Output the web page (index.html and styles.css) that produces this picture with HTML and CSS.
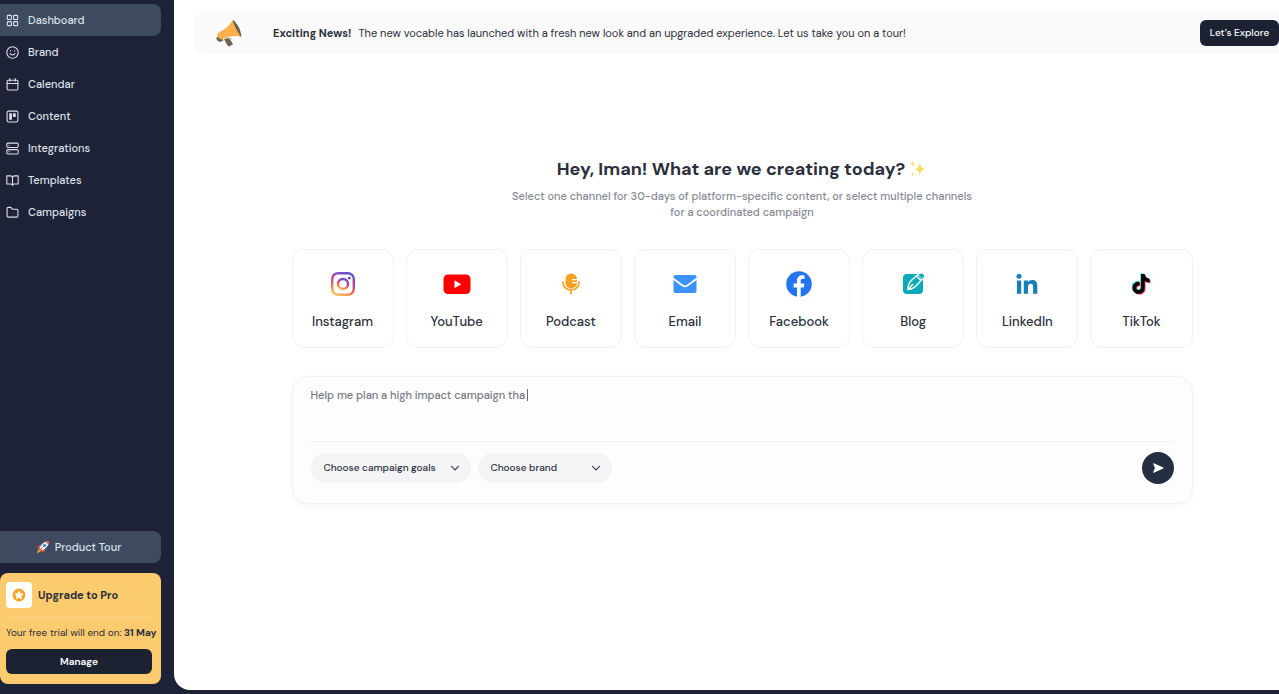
FILE: index.html
```
<!DOCTYPE html>
<html lang="en">
<head>
	<meta charset="UTF-8">
	<meta name="viewport" content="width=device-width, initial-scale=1">
	<title>Vocable - Dashboard</title>
	<link rel="stylesheet" href="styles.css">
</head>
<body>
	<div class="app">
		<aside class="sidebar">
			<nav class="nav">
				<a href="#" class="nav-item on">
					<svg class="icon" viewBox="0 0 24 24"><rect x="2.5" y="2.5" width="7.5" height="7.5" rx="1"/><rect x="14" y="2.5" width="7.5" height="7.5" rx="1"/><rect x="2.5" y="14" width="7.5" height="7.5" rx="1"/><rect x="14" y="14" width="7.5" height="7.5" rx="1"/></svg>
					Dashboard
				</a>
				<a href="#" class="nav-item">
					<svg class="icon" viewBox="0 0 24 24"><circle cx="12" cy="12" r="10.5"/><path d="M7.5 14s1.5 2.500 4.500 2.500 4.500-2.500 4.500-2.500M8.500 8.500v.8M15.500 8.500v.8"/></svg>
					Brand
				</a>
				<a href="#" class="nav-item">
					<svg class="icon" viewBox="0 0 24 24"><rect x="2" y="4" width="20" height="18" rx="2"/><path d="M7 1v5M17 1v5M2 10h20"/></svg>
					Calendar
				</a>
				<a href="#" class="nav-item">
					<svg class="icon" viewBox="0 0 24 24"><rect x="2" y="2" width="20" height="20" rx="3"/><path class="solid" d="M6 6h5v12H6zM13 6h5v7h-5z"/></svg>
					Content
				</a>
				<a href="#" class="nav-item">
					<svg class="icon" viewBox="0 0 24 24"><rect x="1.500" y="2" width="21" height="8" rx="2"/><rect x="1.500" y="14" width="21" height="8" rx="2"/><path d="M5.500 6h.5M5.500 18h.5"/></svg>
					Integrations
				</a>
				<a href="#" class="nav-item">
					<svg class="icon" viewBox="0 0 24 24"><path d="M1.500 3.500h7a3.500 3.500 0 0 1 3.500 3.500v14a3 3 0 0 0-3-2.500H1.500zM22.500 3.500h-7A3.500 3.500 0 0 0 12 7v14a3 3 0 0 1 3-2.500h7.500z"/></svg>
					Templates
				</a>
				<a href="#" class="nav-item">
					<svg class="icon" viewBox="0 0 24 24"><path d="M22 18.500a2 2 0 0 1-2 2H4a2 2 0 0 1-2-2v-14a2 2 0 0 1 2-2h5l2.500 3.500H20a2 2 0 0 1 2 2z"/></svg>
					Campaigns
				</a>
			</nav>

			<div class="sidebar-bottom">
				<button type="button" class="tour">
					<svg class="rocket" viewBox="0 0 28 28">
						<path fill="#f7a823" d="M9 17c-4 0-6 4-7 9 5-1 8-3 9-7z"/>
						<path fill="#d9493c" d="M11 9c-4 0-7 3-9 7l6 1zM19 17c0 4-3 7-7 9l-1-6z"/>
						<path fill="#e4edf2" d="M26 2C18 2 11 7 7 16l5 5c9-4 14-11 14-19z"/>
						<path fill="#d9493c" d="M26 2c-3 0-5 .4-7 1.200L24.800 9C25.600 7 26 5 26 2z"/>
						<circle cx="17" cy="11" r="3.500" fill="#4d94c4"/>
						<path stroke="#b5433b" stroke-width="2" stroke-linecap="round" d="M7 21l5-5"/>
					</svg>
					Product Tour
				</button>

				<section class="upgrade">
					<div class="upgrade-head">
						<span class="upgrade-icon">
							<svg viewBox="0 0 24 24"><circle cx="12" cy="12" r="11" fill="#f8a42b"/><path fill="#fff" stroke="#fff" stroke-width="1.500" stroke-linejoin="round" d="M12 5.500l2 4.300 4.600.6-3.400 3.200.9 4.600-4.100-2.300-4.100 2.300.9-4.600-3.400-3.200 4.600-.6z"/></svg>
						</span>
						<h2>Upgrade to Pro</h2>
					</div>
					<p>Your free trial will end on: <b>31 May</b></p>
					<button type="button" class="manage">Manage</button>
				</section>
			</div>
		</aside>

		<main class="main">
			<div class="banner">
				<svg class="megaphone" viewBox="0 0 28 28">
					<path fill="#6c6250" d="M9 20l5-1 4 6-3.500 2.500-2-1zM1.500 18.500l4-2 3 5-3.500 1.500c-2.500-.5-4-2.500-3.500-4.500z"/>
					<path fill="#6c6250" d="M18 1c4 3 8 10 8.500 17l-3-2-6-12z"/>
					<path fill="#fbb04c" d="M17.500 1c-2 5-7 9-14.500 13-2 2 1 6.500 3.500 6.500C14 17 21 16 26.500 18.500 24 15 19 7 17.500 1z"/>
					<path fill="#6c6250" d="M21 7.500c3-.5 4.500 2.500 2.700 5z"/>
					<path fill="none" stroke="#a98148" d="M13 18.500c0 3 3 2.500 3 .5"/>
				</svg>
				<p><b>Exciting News!</b> The new vocable has launched with a fresh new look and an upgraded experience. Let us take you on a tour!</p>
				<button type="button" class="explore">Let’s Explore</button>
			</div>

			<div class="hero">
				<h1>
					Hey, Iman! What are we creating today?
					<svg class="sparkles" viewBox="0 0 24 24"><path fill="#fddb62" d="M14.500 3c1 6 2 8 8 9-6 1-7 3-8 9.500-1-6.500-2-8.500-8-9.500 6-1 7-3 8-9zM5 1c.5 2.500 1 3.300 3.500 4C6 5.500 5.500 6.500 5 9c-.5-2.500-1-3.500-3.500-4C4 4.300 4.500 3.500 5 1zM5 16c.4 2 .8 2.500 2.500 3-1.700.5-2.100 1-2.500 3-.4-2-.8-2.500-2.500-3 1.700-.5 2.100-1 2.500-3z"/></svg>
				</h1>
				<p class="sub">Select one channel for 30-days of platform-specific content, or select multiple channels for a coordinated campaign</p>

				<div class="channels">
					<button type="button" class="channel">
						<svg viewBox="0 0 28 28">
							<defs><linearGradient id="insta" x1="0.200" y1="1" x2="0.600" y2="0"><stop offset="0" stop-color="#fbc05a"/><stop offset="0.350" stop-color="#ee6b57"/><stop offset="0.650" stop-color="#c13f96"/><stop offset="1" stop-color="#6a50cc"/></linearGradient></defs>
							<g fill="none" stroke="url(#insta)" stroke-width="2.400"><rect x="3.200" y="3.200" width="21.600" height="21.600" rx="6"/><circle cx="14" cy="14" r="5"/></g>
							<circle cx="20.300" cy="7.900" r="1.500" fill="#8c45b5"/>
						</svg>
						Instagram
					</button>
					<button type="button" class="channel">
						<svg viewBox="0 0 28 28"><rect x="0.500" y="4.500" width="27" height="19.500" rx="4.500" fill="#f00"/><path fill="#fff" d="M11.500 10.300v7.900l6.700-3.900z"/></svg>
						YouTube
					</button>
					<button type="button" class="channel">
						<svg viewBox="0 0 28 28">
							<rect x="8.500" y="3.500" width="11.500" height="15" rx="5.700" fill="#f8a020"/>
							<path stroke="#fff" stroke-width="1.200" d="M15 9.700h5.500M15 12.700h5.500"/>
							<path fill="none" stroke="#f8a020" stroke-width="1.700" stroke-linecap="round" d="M6 12c0 5 3.500 8 8 8s8-3 8-8M14 20.500v3"/>
						</svg>
						Podcast
					</button>
					<button type="button" class="channel">
						<svg viewBox="0 0 28 28"><rect x="2.500" y="5" width="23" height="18" rx="2" fill="#3c91fb"/><path fill="none" stroke="#fff" stroke-width="1.800" d="M2 8.500l9.500 7q2.500 1.700 5 0l9.500-7"/></svg>
						Email
					</button>
					<button type="button" class="channel">
						<svg viewBox="0 0 28 28"><circle cx="14" cy="14" r="12.800" fill="#2374ef"/><path fill="#fff" d="M12 27v-9.500H8.600v-3.900H12v-2.800c0-3.600 2.200-5.500 5.300-5.500 1 0 2.200.2 2.200.2v3.300h-1.800c-1.500 0-2 .9-2 2v2.800h3.700l-.6 3.900h-3.100V27z"/></svg>
						Facebook
					</button>
					<button type="button" class="channel">
						<svg viewBox="0 0 28 28">
							<rect x="4" y="4" width="20" height="20" rx="4" fill="#0baab9"/>
							<path fill="#0baab9" stroke="#fff" stroke-width="1.400" stroke-linejoin="round" d="M9 19.500c-.3-4 .7-6.500 3.500-9.300L19 4.500l4.500 4.300-6 6.700c-2.800 2.800-5 3.900-8.500 4zM9 19.500l5-5.500M17.500 6.200l4.400 4.300"/>
							<path fill="#0baab9" d="M20.500 4.500q2-2 3.800-.3t0 3.600l-1 1-3.600-3.500z"/>
						</svg>
						Blog
					</button>
					<button type="button" class="channel">
						<svg viewBox="0 0 28 28" fill="#167fb8"><circle cx="6" cy="6.300" r="2.500"/><path d="M3.900 10.500h4.300v13.300H3.900zM10.800 10.500h4v1.900c.7-1.200 2.200-2.300 4.300-2.300 4.100 0 5.200 2.700 5.200 6.400v7.300h-4.200v-6.600c0-1.800-.3-3.500-2.300-3.500s-2.800 1.400-2.800 3.400v6.700h-4.200z"/></svg>
						LinkedIn
					</button>
					<button type="button" class="channel">
						<svg viewBox="0 0 28 28">
							<defs><path id="note" d="M14 4h3.600c.3 2.800 2 4.500 4.900 4.700v3.700c-1.900 0-3.500-.6-4.900-1.600v6.900c0 8.200-12.100 8.200-12.100 0 0-3.900 3.200-6.500 7-6v3.800c-2-.5-3.400.6-3.400 2.300 0 3 4.900 3 4.900-.4z"/></defs>
							<use href="#note" x="-0.800" y="-0.600" fill="#25e5e0"/><use href="#note" x="0.900" y="0.700" fill="#fa2b5a"/><use href="#note" fill="#050505"/>
						</svg>
						TikTok
					</button>
				</div>

				<form class="prompt">
					<div class="prompt-text">
						<textarea aria-label="Campaign prompt" spellcheck="false">Help me plan a high impact campaign tha</textarea>
						<span class="caret"></span>
					</div>
					<div class="prompt-actions">
						<div class="picker goals">
							<select aria-label="Campaign goals"><option>Choose campaign goals</option></select>
							<svg viewBox="0 0 12 12"><path d="M2.500 4.300L6 7.800l3.500-3.500"/></svg>
						</div>
						<div class="picker brand">
							<select aria-label="Brand"><option>Choose brand</option></select>
							<svg viewBox="0 0 12 12"><path d="M2.500 4.300L6 7.800l3.500-3.500"/></svg>
						</div>
						<button type="submit" class="send" aria-label="Send">
							<svg viewBox="0 0 16 16"><path fill="#fff" stroke="#fff" stroke-linejoin="round" d="M3 3l11 5-11 5 2-5z"/></svg>
						</button>
					</div>
				</form>
			</div>
		</main>
	</div>
</body>
</html>
```
FILE: styles.css
```
* {
	box-sizing: border-box;
	margin: 0;
	padding: 0;
}
body {
	font-family: "DM Sans", Inter, sans-serif;
	font-size: 11px;
	line-height: 16px;
	color: #2b2f3d;
	background: #1e2236;
}
button, select, textarea {
	font: inherit;
	color: inherit;
	border: 0;
}
button {
	cursor: pointer;
}
a {
	text-decoration: none;
}
.app {
	display: flex;
	min-height: 100vh;
	padding-bottom: 4px;
}

/* sidebar */
.sidebar {
	flex: 0 0 174px;
	min-width: 0;
	display: flex;
	flex-direction: column;
	justify-content: space-between;
	padding: 4px 13px 6px 0;
}
.nav-item {
	display: flex;
	align-items: center;
	gap: 9px;
	height: 32px;
	padding-left: 6px;
	font-weight: 500;
	color: #dde1ea;
	border-radius: 0 8px 8px 0;
}
.nav-item.on, .tour {
	background: #3d4a60;
}
.icon {
	width: 13px;
	height: 13px;
	fill: none;
	stroke: currentColor;
	stroke-width: 2;
	stroke-linecap: round;
	stroke-linejoin: round;
}
.icon .solid {
	fill: currentColor;
	stroke: none;
}
.sidebar-bottom {
	display: flex;
	flex-direction: column;
	gap: 10px;
}
.tour {
	display: flex;
	align-items: center;
	justify-content: center;
	gap: 5px;
	height: 32px;
	padding-right: 4px;
	font-weight: 500;
	color: #dde1ea;
	border-radius: 0 8px 8px 0;
}
.rocket {
	width: 14px;
	height: 14px;
}
.upgrade {
	padding: 9px 9px 10px 6px;
	background: #fbcb6d;
	border-radius: 8px;
}
.upgrade-head {
	display: flex;
	align-items: center;
	gap: 6px;
	padding-bottom: 9px;
	border-bottom: 1px solid #fcd58a;
}
.upgrade-icon {
	display: flex;
	align-items: center;
	justify-content: center;
	width: 26px;
	height: 26px;
	background: #fff;
	border-radius: 4px;
}
.upgrade-icon svg {
	width: 14px;
	height: 14px;
}
.upgrade h2 {
	font-size: 11px;
	font-weight: 700;
}
.upgrade p {
	padding: 7px 0 8px;
	font-size: 10px;
	white-space: nowrap;
}
.manage {
	width: 100%;
	height: 25px;
	font-size: 10px;
	font-weight: 600;
	color: #fff;
	background: #1d2233;
	border-radius: 6px;
}

/* main */
.main {
	flex: 1;
	min-width: 0;
	padding: 12px 0 0 20px;
	background: #fff;
	border-bottom-left-radius: 16px;
}
.banner {
	display: flex;
	align-items: center;
	height: 42px;
	padding-left: 21px;
	background: #fafafa;
	border-radius: 10px 0 0 10px;
}
.megaphone {
	width: 28px;
	height: 28px;
}
.banner p {
	flex: 1;
	padding-left: 30px;
}
.banner p b {
	margin-right: 4px;
}
.explore {
	width: 79px;
	height: 26px;
	font-size: 10px;
	font-weight: 500;
	color: #fff;
	background: #1d2233;
	border-radius: 6px;
}
.hero {
	display: flex;
	flex-direction: column;
	align-items: center;
	padding: 103px 0 40px 11px;
}
h1 {
	display: flex;
	align-items: center;
	gap: 4px;
	font-size: 18px;
	line-height: 24px;
	font-weight: 700;
}
.sparkles {
	width: 18px;
	height: 18px;
}
.sub {
	max-width: 468px;
	margin-top: 7px;
	font-weight: 500;
	color: #858994;
	text-align: center;
}
.channels {
	display: grid;
	grid-template-columns: repeat(8, 1fr);
	gap: 12px;
	width: 100%;
	max-width: 901px;
	margin-top: 29px;
}
.channel {
	display: flex;
	flex-direction: column;
	align-items: center;
	gap: 16px;
	height: 99px;
	padding-top: 20px;
	font-size: 13px;
	font-weight: 500;
	background: #fff;
	border: 1px solid #f1f1f3;
	border-radius: 12px;
}
.channel svg {
	width: 28px;
	height: 28px;
}

/* prompt box */
.prompt {
	width: 100%;
	max-width: 901px;
	margin-top: 28px;
	padding: 10px 18px 19px;
	background: #fdfcfe;
	border: 1px solid #f2f2f6;
	border-radius: 16px;
	box-shadow: 0 2px 6px rgba(30, 34, 54, .04);
}
.prompt-text {
	position: relative;
	border-bottom: 1px solid #f1f0f4;
}
.prompt textarea {
	display: block;
	width: 100%;
	height: 54px;
	font-weight: 500;
	color: #757984;
	background: none;
	outline: 0;
	resize: none;
}
.caret {
	position: absolute;
	top: 2px;
	left: 216px;
	width: 1px;
	height: 12px;
	background: #686c78;
}
.prompt-actions {
	display: flex;
	align-items: center;
	gap: 7px;
	margin-top: 10px;
}
.picker {
	position: relative;
}
.picker select {
	width: 100%;
	height: 30px;
	padding: 0 28px 0 13px;
	font-size: 10px;
	font-weight: 500;
	background: #f4f4f7;
	border-radius: 15px;
	appearance: none;
}
.picker svg {
	position: absolute;
	top: 9px;
	right: 10px;
	width: 12px;
	height: 12px;
	fill: none;
	stroke: #3b4050;
	stroke-width: 1.2;
	stroke-linecap: round;
	pointer-events: none;
}
.goals {
	width: 160px;
}
.brand {
	width: 134px;
}
.send {
	display: flex;
	align-items: center;
	justify-content: center;
	width: 32px;
	height: 32px;
	margin-left: auto;
	background: #262f42;
	border-radius: 50%;
}
.send svg {
	width: 14px;
	height: 14px;
}
```
